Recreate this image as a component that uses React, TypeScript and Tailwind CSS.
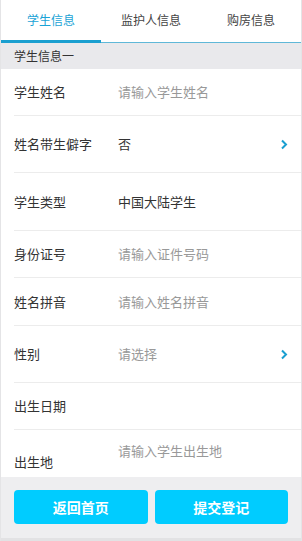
import { useState } from "react";

const rows = [
  { label: "学生姓名", value: "请输入学生姓名", placeholder: true, h: "h-[47px]" },
  { label: "姓名带生僻字", value: "否", placeholder: false, arrow: true, h: "h-[57px]" },
  { label: "学生类型", value: "中国大陆学生", placeholder: false, strong: true, h: "h-[58px]" },
  { label: "身份证号", value: "请输入证件号码", placeholder: true, h: "h-[47px]" },
  { label: "姓名拼音", value: "请输入姓名拼音", placeholder: true, h: "h-[48px]" },
  { label: "性别", value: "请选择", placeholder: true, arrow: true, h: "h-[57px]" },
  { label: "出生日期", value: "", placeholder: true, h: "h-[47px]" },
];

function Chevron() {
  return (
    <svg width="8" height="11" viewBox="0 0 8 11" className="mr-[13px]">
      <path d="M2 1.5 L6 5.5 L2 9.5" fill="none" stroke="#1a9fd0" strokeWidth="2" />
    </svg>
  );
}

export default function App() {
  const [tab, setTab] = useState(0);
  const tabs = ["学生信息", "监护人信息", "购房信息"];

  return (
    <div
      className="w-[302px] h-[541px] bg-white flex flex-col border-x border-[#e4e4e6] overflow-hidden"
      style={{ fontFamily: '"Noto Sans CJK SC", "Noto Sans", sans-serif' }}
    >
      {/* tabs */}
      <div className="flex h-[40px] bg-white">
        {tabs.map((t, i) => (
          <button
            key={t}
            onClick={() => setTab(i)}
            className={
              "flex-1 flex items-center justify-center text-[12px] " +
              (tab === i ? "text-[#1aa3d6]" : "text-[#444]")
            }
          >
            {t}
          </button>
        ))}
      </div>
      <div className="relative h-[3px] border-b border-[#5fb8d8]">
        <div className="absolute left-0 top-0 h-[3px] w-[100px] bg-[#1a9fd0]" />
      </div>

      <div className="h-[26px] bg-[#e9e9ec] flex items-center px-[13px] text-[12px] text-[#333]">
        学生信息一
      </div>

      {/* form rows */}
      <div className="flex flex-col pl-[13px]">
        {rows.map((r) => (
          <div
            key={r.label}
            className={r.h + " flex items-center border-b border-[#ececec] text-[13px]"}
          >
            <div className="w-[104px] text-[#333]">{r.label}</div>
            <div className={"flex-1 " + (r.placeholder ? "text-[#999]" : "text-[#333]")}>
              {r.value}
            </div>
            {r.arrow && <Chevron />}
          </div>
        ))}
        <div className="h-[47px] flex text-[13px]">
          <div className="w-[104px] text-[#333] pt-[22px]">出生地</div>
          <div className="flex-1 text-[#999] pt-[11px]">请输入学生出生地</div>
        </div>
      </div>

      {/* footer */}
      <div className="flex-1 bg-[#eeeef0] border-b-[3px] border-[#e2e2e4] flex gap-[7px] px-[13px] pt-[13px]">
        <button className="flex-1 h-[34px] rounded-[4px] bg-[#00ccff] text-white text-[14px] font-bold">
          返回首页
        </button>
        <button className="flex-1 h-[34px] rounded-[4px] bg-[#00ccff] text-white text-[14px] font-bold">
          提交登记
        </button>
      </div>
    </div>
  );
}
